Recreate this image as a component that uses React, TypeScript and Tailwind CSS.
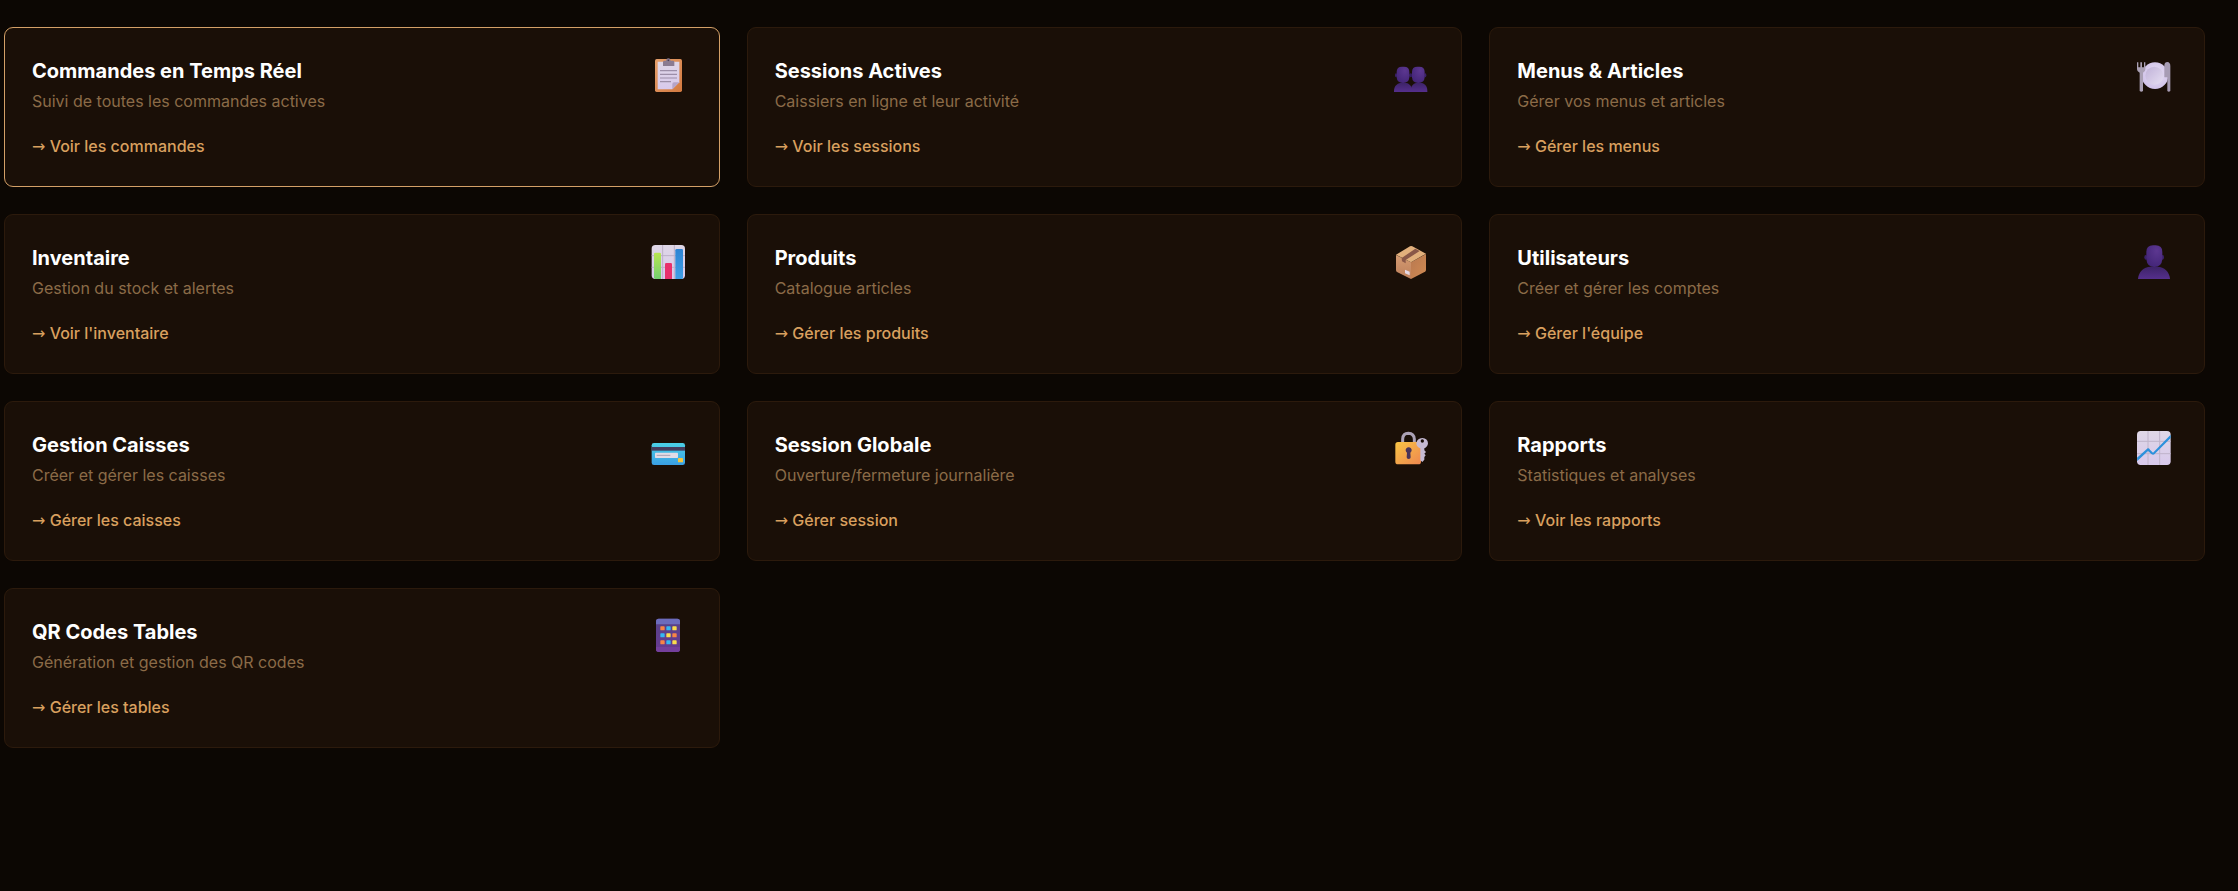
import type { ReactNode } from "react";

type Card = {
  title: string;
  text: string;
  action: string;
  href: string;
  viewBox: string;
  icon: ReactNode;
  active?: boolean;
};

const Person = () => (
  <>
    <ellipse cx="62" cy="58" rx="4" ry="7" fill="#3b2069" />
    <ellipse cx="113" cy="58" rx="4" ry="7" fill="#3b2069" />
    <path d="M39 123C40 102 57 86 76 86H98C117 86 134 102 135 123Z" fill="url(#bust)" />
    <path d="M64 42Q64 22 84 22H92Q112 22 112 42V64Q110 87 88 87Q66 87 64 64Z" fill="url(#head)" />
  </>
);

const Gradients = () => (
  <svg className="absolute size-0" aria-hidden="true">
    <defs>
      <radialGradient id="head" cx="0.65" cy="0.25" r="0.8">
        <stop offset="0" stopColor="#5c3790" />
        <stop offset="1" stopColor="#432578" />
      </radialGradient>
      <linearGradient id="bust" x1="0" y1="0" x2="0" y2="1">
        <stop offset="0" stopColor="#3d2367" />
        <stop offset="1" stopColor="#552f8c" />
      </linearGradient>
      <linearGradient id="board" x1="0" y1="0" x2="1" y2="1">
        <stop offset="0" stopColor="#e5a06c" />
        <stop offset="1" stopColor="#d3793f" />
      </linearGradient>
      <linearGradient id="paper" x1="0" y1="0" x2="0" y2="1">
        <stop offset="0" stopColor="#dfd7e6" />
        <stop offset="1" stopColor="#d8c9ec" />
      </linearGradient>
      <radialGradient id="plate" cx="0.55" cy="0.45" r="0.6">
        <stop offset="0" stopColor="#e8e0f4" />
        <stop offset="1" stopColor="#cfc0e8" />
      </radialGradient>
      <linearGradient id="bowl" x1="0" y1="0" x2="1" y2="1">
        <stop offset="0" stopColor="#c0b2d8" />
        <stop offset="1" stopColor="#e6def2" />
      </linearGradient>
      <linearGradient id="green" x1="0" y1="0" x2="0" y2="1">
        <stop offset="0" stopColor="#b8e650" />
        <stop offset="1" stopColor="#74cf72" />
      </linearGradient>
      <linearGradient id="blue" x1="0" y1="0" x2="0" y2="1">
        <stop offset="0" stopColor="#2d84d4" />
        <stop offset="1" stopColor="#3f9fe6" />
      </linearGradient>
      <linearGradient id="boxLeft" x1="0" y1="0" x2="0" y2="1">
        <stop offset="0" stopColor="#d49b72" />
        <stop offset="1" stopColor="#bd7f5a" />
      </linearGradient>
      <linearGradient id="boxRight" x1="0" y1="0" x2="1" y2="1">
        <stop offset="0" stopColor="#b87850" />
        <stop offset="1" stopColor="#d08a52" />
      </linearGradient>
      <linearGradient id="bank" x1="0" y1="0" x2="0" y2="1">
        <stop offset="0" stopColor="#4bd0e6" />
        <stop offset="1" stopColor="#3a9fe4" />
      </linearGradient>
      <linearGradient id="gold" x1="0" y1="0" x2="1" y2="1">
        <stop offset="0" stopColor="#f8c444" />
        <stop offset="1" stopColor="#ee8750" />
      </linearGradient>
      <linearGradient id="phone" x1="0" y1="0" x2="0" y2="1">
        <stop offset="0" stopColor="#554286" />
        <stop offset="1" stopColor="#693a92" />
      </linearGradient>
    </defs>
  </svg>
);

const keypad = [
  ["#f98545", "#35b8f2", "#fadd4c"],
  ["#35b8f2", "#fadd4c", "#f98545"],
  ["#f98545", "#35b8f2", "#fadd4c"],
];

const cards: Card[] = [
  {
    title: "Commandes en Temps Réel",
    text: "Suivi de toutes les commandes actives",
    action: "Voir les commandes",
    href: "#commandes",
    viewBox: "12 15 144 120",
    active: true,
    icon: (
      <>
        <rect x="45" y="27" width="81" height="99" rx="5" fill="url(#board)" />
        <path d="M53 35H118V97L97 118H53Z" fill="url(#paper)" />
        <path d="M97 118V102Q97 97 102 97H118Z" fill="#b5a4c8" />
        <path d="M69 48V36Q69 32 74 32H78Q79 25 85 25Q91 25 92 32H98Q103 32 103 36V48Z" fill="#8b7c91" />
        <circle cx="85" cy="31" r="2.5" fill="#4c3d50" />
        <path d="M60 62H111M60 73H111M60 84H111M60 95H93" stroke="#9c8ea8" strokeWidth="3.5" />
      </>
    ),
  },
  {
    title: "Sessions Actives",
    text: "Caissiers en ligne et leur activité",
    action: "Voir les sessions",
    href: "#sessions",
    viewBox: "3 15 144 120",
    icon: (
      <>
        <ellipse cx="33" cy="76" rx="3" ry="6" fill="#3b2069" />
        <ellipse cx="77" cy="76" rx="5" ry="6" fill="#321b5c" />
        <ellipse cx="121" cy="76" rx="3" ry="6" fill="#3b2069" />
        <path d="M27 126V122C27 107 38 98 52 98H58C72 98 81 107 81 122V126Z" fill="url(#bust)" />
        <path d="M77 126V122C77 107 86 98 99 98H104C118 98 127 107 127 122V126Z" fill="url(#bust)" />
        <path d="M35 66Q35 50 51 50H57Q73 50 73 66V82Q72 99 54 99Q36 99 35 82Z" fill="url(#head)" />
        <path d="M81 66Q81 50 97 50H103Q119 50 119 66V82Q118 99 100 99Q82 99 81 82Z" fill="url(#head)" />
      </>
    ),
  },
  {
    title: "Menus & Articles",
    text: "Gérer vos menus et articles",
    action: "Gérer les menus",
    href: "#menus",
    viewBox: "12 15 144 120",
    icon: (
      <>
        <circle cx="90" cy="77" r="40" fill="url(#plate)" />
        <circle cx="88" cy="77" r="27" fill="url(#bowl)" />
        <path
          d="M36 37H40V52H46V37H51V52H57V37H61V58Q61 66 54 68V123Q49 128 44 123V68Q36 66 36 58Z"
          fill="#aaa0b4"
        />
        <path d="M118 45Q119 36 127 36Q136 37 136 48V123Q131 128 127 123V82H118Z" fill="#a79cb4" />
      </>
    ),
  },
  {
    title: "Inventaire",
    text: "Gestion du stock et alertes",
    action: "Voir l'inventaire",
    href: "#inventaire",
    viewBox: "12 12 144 120",
    icon: (
      <>
        <rect x="35" y="21" width="100" height="102" rx="11" fill="url(#paper)" />
        <path d="M68 21V123M103 21V123M35 53H135M35 88H135" stroke="#bcb0c8" strokeWidth="3" />
        <path d="M42 48Q42 44 46 44H59Q63 44 63 48V123H46Q42 123 42 118Z" fill="url(#green)" />
        <path d="M75 79Q75 75 79 75H92Q96 75 96 79V123H75Z" fill="#e8306c" />
        <path d="M106 37Q106 33 110 33H125Q129 33 129 37V120Q128 123 125 123H106Z" fill="url(#blue)" />
      </>
    ),
  },
  {
    title: "Produits",
    text: "Catalogue articles",
    action: "Gérer les produits",
    href: "#produits",
    viewBox: "3 12 144 120",
    icon: (
      <>
        <path d="M33 51L78 73V123L36 102Q33 100 33 96Z" fill="url(#boxLeft)" />
        <path d="M123 48L78 73V123L120 101Q123 99 123 95Z" fill="url(#boxRight)" />
        <path d="M33 50L75 25Q78 23 82 25L123 47L78 73Z" fill="#e2b07c" />
        <path d="M50 60L91 32L104 39L62 66V76L51 70Z" fill="#8a5848" />
        <path d="M60 95L74 101V112L60 106Z" fill="#e5d8e4" />
      </>
    ),
  },
  {
    title: "Utilisateurs",
    text: "Créer et gérer les comptes",
    action: "Gérer l'équipe",
    href: "#utilisateurs",
    viewBox: "12 12 144 120",
    icon: <Person />,
  },
  {
    title: "Gestion Caisses",
    text: "Créer et gérer les caisses",
    action: "Gérer les caisses",
    href: "#caisses",
    viewBox: "12 12 144 120",
    icon: (
      <>
        <rect x="35" y="54" width="100" height="66" rx="7" fill="url(#bank)" />
        <rect x="35" y="66" width="100" height="11" fill="#463c5c" />
        <rect x="45" y="83" width="69" height="16" rx="2" fill="#e2dce6" />
        <path d="M50 91H91" stroke="#aaa1b2" strokeWidth="3" />
        <rect x="114" y="99" width="15" height="13" rx="2" fill="#f5c63c" />
      </>
    ),
  },
  {
    title: "Session Globale",
    text: "Ouverture/fermeture journalière",
    action: "Gérer session",
    href: "#session-globale",
    viewBox: "3 12 144 120",
    icon: (
      <>
        <path d="M53 56V42Q54 25 70 25Q87 26 88 42V56" fill="none" stroke="#aca2b6" strokeWidth="9" />
        <rect x="31" y="51" width="77" height="67" rx="8" fill="url(#gold)" />
        <path d="M66 83A9 9 0 1 1 76 83L77 97Q77 102 71 102Q65 102 65 97Z" fill="#493458" />
        <path
          fillRule="evenodd"
          d="M106 70Q94 66 94 55Q96 40 112 39Q128 40 129 55Q128 66 118 70V76L123 81L118 86L122 91L118 96V104L112 111L106 106ZM107 48A5 5 0 1 0 117 48A5 5 0 1 0 107 48Z"
          fill="#c6bad3"
        />
      </>
    ),
  },
  {
    title: "Rapports",
    text: "Statistiques et analyses",
    action: "Voir les rapports",
    href: "#rapports",
    viewBox: "12 12 144 120",
    icon: (
      <>
        <rect x="36" y="18" width="101" height="102" rx="11" fill="url(#paper)" />
        <path d="M69 18V120M104 18V120M36 49H137M36 86H137" stroke="#bfb4ca" strokeWidth="3" />
        <path d="M36 98L68 70Q72 69 75 74L84 83L137 29V39L88 88Q84 91 79 87L69 78L37 108Z" fill="#2c91dc" />
      </>
    ),
  },
  {
    title: "QR Codes Tables",
    text: "Génération et gestion des QR codes",
    action: "Gérer les tables",
    href: "#tables",
    viewBox: "12 17 144 120",
    icon: (
      <>
        <rect x="48" y="25" width="72" height="100" rx="8" fill="url(#phone)" />
        <path d="M48 42V33Q48 25 56 25H112Q120 25 120 33V42Z" fill="#6c6cbc" />
        <path d="M48 110H120V117Q120 125 112 125H56Q48 125 48 117Z" fill="#743f9c" />
        {keypad.map((row, r) =>
          row.map((color, c) => (
            <rect key={`${r}-${c}`} x={61 + c * 18} y={48 + r * 21} width="13" height="12" rx="2" fill={color} />
          )),
        )}
      </>
    ),
  },
];

export default function App() {
  return (
    <main className="min-h-screen bg-[#0c0703] pt-[27px] pr-[33px] pb-8 pl-1 font-['Inter',sans-serif]">
      <Gradients />
      <div className="grid grid-cols-1 gap-[27px] md:grid-cols-2 lg:grid-cols-3">
        {cards.map((card) => (
          <a
            key={card.title}
            href={card.href}
            className={`flex items-start justify-between rounded-[9px] border bg-[#1a0f07] px-[27px] pt-[27px] pb-7 ${
              card.active ? "border-[#d4a067]" : "border-[#2c1a0c]"
            }`}
          >
            <div>
              <h2 className="text-[20px] leading-[33px] font-bold text-white">{card.title}</h2>
              <p className="mt-0.5 text-[16px] leading-[23px] text-[#8b6b47]">{card.text}</p>
              <p className="mt-[21px] text-[16px] leading-6 font-medium text-[#d9a05f]">
                <span className="font-['DejaVu_Sans',sans-serif] leading-none font-normal">→</span>{" "}
                {card.action}
              </p>
            </div>
            <svg viewBox={card.viewBox} className="h-10 w-12 shrink-0" aria-hidden="true">
              {card.icon}
            </svg>
          </a>
        ))}
      </div>
    </main>
  );
}
